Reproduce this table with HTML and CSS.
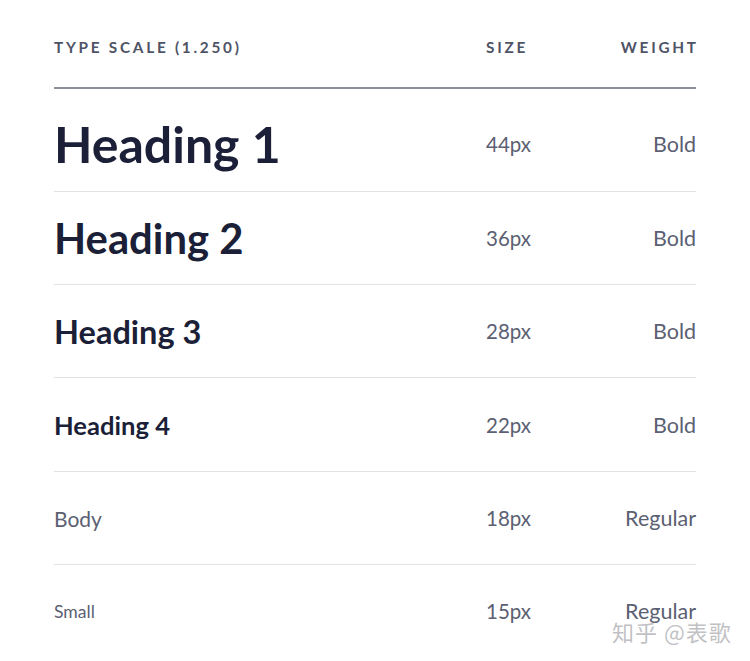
FILE: index.html
```html
<!DOCTYPE html>
<html lang="zh">
<head>
<meta charset="utf-8">
<title>Type scale</title>
<link rel="stylesheet" href="styles.css">
</head>
<body>
<div class="table">
  <div class="row head">
    <div class="c-name">Type Scale (1.250)</div>
    <div class="c-size">Size</div>
    <div class="c-weight">Weight</div>
  </div>
  <div class="row r1">
    <div class="c-name h1">Heading 1</div>
    <div class="c-size">44px</div>
    <div class="c-weight">Bold</div>
  </div>
  <div class="row">
    <div class="c-name h2">Heading 2</div>
    <div class="c-size">36px</div>
    <div class="c-weight">Bold</div>
  </div>
  <div class="row">
    <div class="c-name h3">Heading 3</div>
    <div class="c-size">28px</div>
    <div class="c-weight">Bold</div>
  </div>
  <div class="row r4">
    <div class="c-name h4">Heading 4</div>
    <div class="c-size">22px</div>
    <div class="c-weight">Bold</div>
  </div>
  <div class="row">
    <div class="c-name body-t">Body</div>
    <div class="c-size">18px</div>
    <div class="c-weight">Regular</div>
  </div>
  <div class="row last">
    <div class="c-name small-t">Small</div>
    <div class="c-size">15px</div>
    <div class="c-weight">Regular</div>
  </div>
</div>
<div class="watermark">知乎 @表歌</div>
</body>
</html>
```
FILE: styles.css
```css
html, body {
  margin: 0;
  padding: 0;
  background: #ffffff;
}
body {
  width: 750px;
  height: 661px;
  overflow: hidden;
  position: relative;
  font-family: Lato, "Noto Sans", sans-serif;
}
.table {
  margin-left: 54px;
  width: 642px;
}
.row {
  display: grid;
  grid-template-columns: 432px 1fr auto;
  align-items: center;
  height: 92px;
  border-bottom: 1px solid #e1e2e6;
  color: #5b6072;
  font-size: 20.5px;
}
.row.head {
  height: 87px;
  border-bottom: 2px solid #8c8f9c;
  font-size: 15.3px;
  font-weight: 700;
  letter-spacing: 2.75px;
  text-transform: uppercase;
  color: #4e5366;
  align-items: start;
}
.row.head > div {
  margin-top: 38px;
}
.row.head .c-weight {
  margin-right: -2.75px;
}
.row.r1 {
  height: 102px;
}
.row.r4 {
  height: 93px;
}
.row.last {
  border-bottom: none;
}
.c-weight {
  text-align: right;
  font-size: 21.5px;
}
.head .c-weight {
  font-size: 15.3px;
}
.h1, .h2, .h3, .h4 {
  font-weight: 700;
  color: #1b1f37;
}
.h1 { font-size: 50px; padding-top: 8px; }
.h2 { font-size: 41.8px; }
.h3 { font-size: 32.5px; }
.h4 { font-size: 25.6px; }
.body-t { font-size: 21px; }
.small-t { font-size: 17.6px; }
.r1 .c-size, .r1 .c-weight { padding-top: 8px; }
.watermark {
  position: absolute;
  left: 612px;
  top: 615px;
  font-family: "Noto Sans CJK SC", sans-serif;
  font-size: 22px;
  color: rgba(165, 165, 170, 0.7);
  letter-spacing: 1px;
  text-shadow: 0 0 1px #fff;
}
```
